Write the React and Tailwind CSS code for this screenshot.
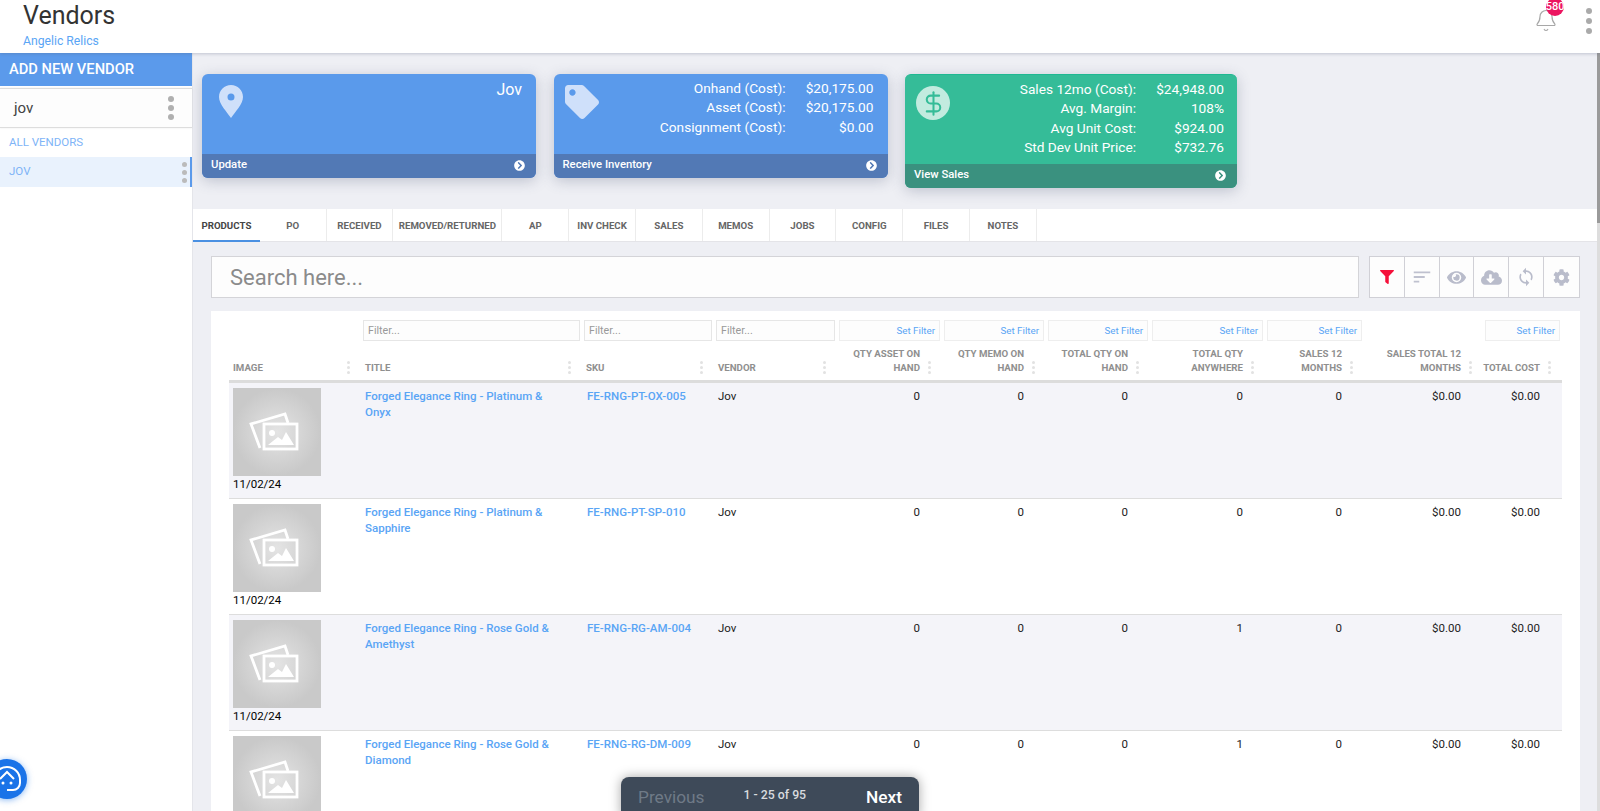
import { FaChevronCircleRight, FaCloudDownloadAlt, FaCog, FaEye, FaFilter, FaTag } from 'react-icons/fa';
import { MdSort, MdSync } from 'react-icons/md';
import { Bell, DollarSign } from 'lucide-react';

const COLUMNS = [
  { label: 'Image', width: 'w-[132px]' },
  { label: 'Title', width: 'w-[221px]', filter: 'text' },
  { label: 'SKU', width: 'w-[132px]', filter: 'text' },
  { label: 'Vendor', width: 'w-[123px]', filter: 'text' },
  { label: 'Qty Asset On Hand', width: 'w-[105px]', filter: 'set', right: true },
  { label: 'Qty Memo On Hand', width: 'w-[104px]', filter: 'set', right: true },
  { label: 'Total Qty On Hand', width: 'w-[104px]', filter: 'set', right: true },
  { label: 'Total Qty Anywhere', width: 'w-[115px]', filter: 'set', right: true },
  { label: 'Sales 12 Months', width: 'w-[99px]', filter: 'set', right: true },
  { label: 'Sales Total 12 Months', width: 'w-[119px]', right: true },
  { label: 'Total Cost', width: 'w-[79px]', filter: 'set', right: true },
];

const PRODUCTS = [
  { title: 'Forged Elegance Ring - Platinum & Onyx', sku: 'FE-RNG-PT-OX-005', anywhere: 0 },
  { title: 'Forged Elegance Ring - Platinum & Sapphire', sku: 'FE-RNG-PT-SP-010', anywhere: 0 },
  { title: 'Forged Elegance Ring - Rose Gold & Amethyst', sku: 'FE-RNG-RG-AM-004', anywhere: 1 },
  { title: 'Forged Elegance Ring - Rose Gold & Diamond', sku: 'FE-RNG-RG-DM-009', anywhere: 1 },
];

const TABS = [
  { label: 'Products', width: 'w-[66.8px]' },
  { label: 'PO', width: 'w-[66.8px]' },
  { label: 'Received', width: 'w-[66.8px]' },
  { label: 'Removed/Returned', width: 'w-[109px]' },
  { label: 'AP', width: 'w-[66.8px]' },
  { label: 'Inv Check', width: 'w-[66.8px]' },
  { label: 'Sales', width: 'w-[66.8px]' },
  { label: 'Memos', width: 'w-[66.8px]' },
  { label: 'Jobs', width: 'w-[66.8px]' },
  { label: 'Config', width: 'w-[66.8px]' },
  { label: 'Files', width: 'w-[66.8px]' },
  { label: 'Notes', width: 'w-[66.8px]' },
];

const Kebab = ({ dot, gap, color }) => (
  <div className={`flex flex-col ${gap}`}>
    <span className={`${dot} ${color} rounded-full`} />
    <span className={`${dot} ${color} rounded-full`} />
    <span className={`${dot} ${color} rounded-full`} />
  </div>
);

const Card = ({ icon, rows, title, footer, green }) => (
  <div
    className={`flex flex-col rounded-md overflow-hidden shadow-[0_3px_14px_rgba(70,80,110,0.28)] ${
      green ? 'w-[332px] bg-[#35bc98] border-t border-[#1fb892]' : 'w-[334px] bg-[#5a9aeb]'
    }`}
  >
    <div className={`flex justify-between text-white ${green ? 'h-[89px] pl-[11px] pr-[13px]' : 'h-[80px] pl-[17px] pr-[14px]'}`}>
      <div className="pt-[11px]">{icon}</div>
      {title && <div className="pt-[5px] text-[16px] leading-[22px]">{title}</div>}
      {rows && (
        <div className="pt-[5px] text-[13.7px] leading-[19.4px] text-right">
          {rows.map(([label, value]) => (
            <div key={label} className="flex justify-end">
              <span>{label}</span>
              <span className="w-[88px]">{value}</span>
            </div>
          ))}
        </div>
      )}
    </div>
    <div className={`h-[24px] pb-[1px] flex items-center justify-between pl-[9px] pr-[11px] text-white text-[11.3px] font-medium ${green ? 'bg-[#3a917f]' : 'bg-[#5279b5]'}`}>
      <span>{footer}</span>
      <FaChevronCircleRight className="text-[11px]" />
    </div>
  </div>
);

const PlaceholderImage = () => (
  <div className="w-[88px] h-[88px] bg-[radial-gradient(circle,#e4e4e4,#c9c9c9_70%)]">
    <svg viewBox="0 0 88 88" className="w-[88px] h-[88px]" fill="none" stroke="#fff" strokeWidth="2.800">
      <rect x="31" y="36" width="33" height="25" />
      <path d="M55 35 52 26 18 36 27 60" />
      <circle cx="39" cy="45" r="3" fill="#fff" stroke="none" />
      <path d="M35 57 45 49 49 52 53 44 61 57Z" fill="#fff" stroke="none" />
    </svg>
  </div>
);

const ToolButton = ({ children, last }) => (
  <div className={`w-[35px] flex items-center justify-center ${last ? '' : 'border-r border-[#d0d0d6]'}`}>{children}</div>
);

export default function App() {
  return (
    <div className="relative h-screen overflow-hidden flex flex-col bg-white font-[Roboto,sans-serif]">
      {/* top bar */}
      <header className="relative z-10 h-[53px] shrink-0 flex justify-between bg-white shadow-[0_1px_3px_rgba(90,100,130,0.3)]">
        <div className="pl-[23px]">
          <h1 className="pt-[1px] text-[25px] leading-[30px] text-[#333]">Vendors</h1>
          <p className="pt-[2px] text-[12.2px] leading-[16px] text-[#5aa5f5]">Angelic Relics</p>
        </div>
        <div className="flex items-start pr-[8px]">
          <div className="relative mt-[8px] mr-[28px]">
            <Bell className="w-[24px] h-[25px] text-[#a8a8a8]" strokeWidth={1.2} />
            <span className="absolute -top-[10px] left-[12px] w-[18px] h-[18px] rounded-full bg-[#ec1560] text-white text-[11px] leading-[18px] font-medium flex justify-center">580</span>
          </div>
          <div className="mt-[8px]">
            <Kebab dot="w-[6px] h-[6px]" gap="gap-[4px]" color="bg-[#aaaaaa]" />
          </div>
        </div>
      </header>

      <div className="flex flex-1 min-h-0">
        {/* vendor list */}
        <aside className="w-[193px] shrink-0 bg-white border-r border-[#e4e5ea]">
          <div className="h-[33px] flex items-center pl-[9px] bg-[#5b9aeb] text-white text-[14.7px] font-medium">ADD NEW VENDOR</div>
          <div className="mt-[2px] h-[40px] flex items-center justify-between pl-[14px] pr-[18px] bg-[#fdfdfd] border-y border-[#dddddd] shadow-[0_0_2px_rgba(0,0,0,0.08)]">
            <span className="text-[15px] text-[#444]">jov</span>
            <Kebab dot="w-[6px] h-[6px]" gap="gap-[3px]" color="bg-[#b0b0b0]" />
          </div>
          <div className="h-[29px] flex items-center pl-[9px] text-[11.5px] text-[#7eb4f7]">ALL VENDORS</div>
          <div className="h-[30px] flex items-center justify-between pl-[9px] pr-[3px] bg-[#e9f2fd] border-r-2 border-[#5b9aeb] text-[11.5px] text-[#7eb4f7]">
            <span>JOV</span>
            <Kebab dot="w-[5px] h-[5px]" gap="gap-[3px]" color="bg-[#bbbbbb]" />
          </div>
        </aside>

        <main className="flex-1 min-w-0 overflow-hidden bg-[#eeeff4]">
          {/* summary cards */}
          <div className="h-[156px] pt-[21px] pl-[9px] flex items-start gap-[17.5px]">
            <Card
              title="Jov"
              footer="Update"
              icon={
                <svg width="24" height="33" viewBox="0 0 24 33">
                  <path fillRule="evenodd" fill="#cfe0fa" d="M12 0C5.4 0 0 5.3 0 12c0 7 8 15 12 21 4-6 12-14 12-21C24 5.3 18.600 0 12 0zm0 8.500a3.500 3.500 0 1 1 0 7 3.500 3.500 0 0 1 0-7z" />
                </svg>
              }
            />
            <Card
              footer="Receive Inventory"
              icon={<FaTag className="-ml-[6px] text-[34px] text-[#cfe0fa]" />}
              rows={[
                ['Onhand (Cost):', '$20,175.00'],
                ['Asset (Cost):', '$20,175.00'],
                ['Consignment (Cost):', '$0.00'],
              ]}
            />
            <Card
              green
              footer="View Sales"
              icon={
                <div className="w-[34px] h-[34px] rounded-full bg-[#c2ebdf] flex items-center justify-center">
                  <DollarSign className="w-[27px] h-[27px] text-[#35bc98]" strokeWidth={1.8} />
                </div>
              }
              rows={[
                ['Sales 12mo (Cost):', '$24,948.00'],
                ['Avg. Margin:', '108%'],
                ['Avg Unit Cost:', '$924.00'],
                ['Std Dev Unit Price:', '$732.76'],
              ]}
            />
          </div>

          {/* tabs */}
          <nav className="h-[33px] flex bg-white border-b border-[#e4e4e8]">
            {TABS.map((tab, i) => (
              <div
                key={tab.label}
                className={`${tab.width} shrink-0 flex items-center justify-center pt-[3px] text-[9.7px] font-bold uppercase ${
                  i === 0 ? 'text-[#444] border-b-2 border-[#4a90e2] -mb-px' : 'text-[#666] border-r border-[#ececec]'
                }`}
              >
                {tab.label}
              </div>
            ))}
          </nav>

          {/* search + tools */}
          <div className="mt-[14px] pl-[18px] flex gap-[10px]">
            <div className="w-[1148px] h-[42px] flex items-center pl-[18px] bg-[#fdfdfd] border border-[#d4d4d8] text-[22px] text-[#8b8b8b]">Search here...</div>
            <div className="w-[211px] h-[42px] flex bg-[#fdfdfd] border border-[#d0d0d6]">
              <ToolButton><FaFilter className="text-[14px] text-[#f5103a]" /></ToolButton>
              <ToolButton><MdSort className="text-[22px] text-[#bfc1cf]" /></ToolButton>
              <ToolButton><FaEye className="text-[19px] text-[#b9bccb]" /></ToolButton>
              <ToolButton><FaCloudDownloadAlt className="text-[21px] text-[#b9bccb]" /></ToolButton>
              <ToolButton><MdSync className="text-[20px] text-[#b9bccb]" /></ToolButton>
              <ToolButton last><FaCog className="text-[17px] text-[#b9bccb]" /></ToolButton>
            </div>
          </div>

          {/* grid */}
          <section className="mt-[13px] ml-[18px] w-[1369px] pl-[18px] pr-[18px] bg-white">
            <div className="flex pt-[9px]">
              {COLUMNS.map((col) => (
                <div key={col.label} className={`${col.width} shrink-0 px-[2px]`}>
                  {col.filter === 'text' && (
                    <div className="h-[21px] flex items-center pl-[4px] pt-[1px] bg-[#fdfdfd] border border-[#e6e6e6] text-[10.7px] text-[#999]">Filter...</div>
                  )}
                  {col.filter === 'set' && (
                    <div className="h-[21px] flex items-center justify-end pr-[4px] pt-[1px] bg-[#fdfdfd] border border-[#eeeeee] text-[9.8px] text-[#5aa5f5]">Set Filter</div>
                  )}
                </div>
              ))}
            </div>

            <div className="flex h-[39px] border-b-[3px] border-[#dcdcdc] box-content">
              {COLUMNS.map((col) => (
                <div key={col.label} className={`${col.width} shrink-0 flex items-end pb-[5px] pr-[11px]`}>
                  <div className={`flex-1 text-[9.7px] leading-[14px] font-bold uppercase text-[#8f8f8f] ${col.right ? 'text-right' : 'pl-[4px]'}`}>{col.label}</div>
                  <div className="ml-[8px] mb-[1px]">
                    <Kebab dot="w-[3px] h-[3px]" gap="gap-[2px]" color="bg-[#e2e2e2]" />
                  </div>
                </div>
              ))}
            </div>

            {PRODUCTS.map((p, i) => {
              const values = [0, 0, 0, p.anywhere, 0, '$0.00', '$0.00'];
              return (
                <div key={p.sku} className={`flex h-[116px] border-b border-[#dddddd] text-[11.5px] leading-[16px] ${i % 2 === 0 ? 'bg-[#f4f4f9]' : 'bg-white'}`}>
                  <div className="w-[132px] shrink-0 pl-[4px] pt-[5px] text-black">
                    <PlaceholderImage />
                    <div>11/02/24</div>
                  </div>
                  <div className="w-[221px] shrink-0 pl-[4px] pr-[20px] pt-[5px] font-medium text-[#5aa5f5]">{p.title}</div>
                  <div className="w-[132px] shrink-0 pl-[5px] pt-[5px] font-medium text-[#5aa5f5]">{p.sku}</div>
                  <div className="w-[123px] shrink-0 pl-[4px] pt-[5px] text-[#222]">Jov</div>
                  {COLUMNS.slice(4).map((col, j) => (
                    <div key={col.label} className={`${col.width} shrink-0 pr-[22px] pt-[5px] text-right text-[#222]`}>{values[j]}</div>
                  ))}
                </div>
              );
            })}
          </section>
        </main>

        {/* page scrollbar */}
        <div className="w-[3px] shrink-0 flex flex-col bg-[#dddddd]">
          <div className="h-[170px] bg-[#9a9a9a]" />
        </div>
      </div>

      {/* pager */}
      <div className="absolute left-[621px] top-[777px] w-[298px] h-[40px] flex items-start justify-between pl-[17px] pr-[17px] rounded-t-lg bg-[#3e4a59] shadow-[0_0_12px_rgba(0,0,0,0.35)]">
        <span className="pt-[8px] text-[17.3px] leading-[24px] text-[#6f7a87]">Previous</span>
        <span className="pt-[9px] mr-[21px] text-[12.300px] leading-[18px] font-medium text-[#d8dbdf]">1 - 25 of 95</span>
        <span className="pt-[8px] text-[17.3px] leading-[24px] font-medium text-white">Next</span>
      </div>

      {/* chat bubble */}
      <div className="absolute -left-[13px] top-[759px] w-[40px] h-[40px] rounded-full bg-[#1a73e8] shadow-[0_1px_6px_rgba(26,115,232,0.5)]">
        <svg viewBox="0 0 40 40" className="w-[40px] h-[40px]" fill="none" stroke="#fff" strokeWidth="2">
          <path d="M7 21a13 13 0 0 1 26 0v3a7 7 0 0 1-7 7h-6" />
          <path d="M13 20 20 13l7 7" />
          <circle cx="16" cy="24" r="1.500" fill="#fff" stroke="none" />
          <circle cx="24" cy="24" r="1.500" fill="#fff" stroke="none" />
        </svg>
      </div>
    </div>
  );
}
